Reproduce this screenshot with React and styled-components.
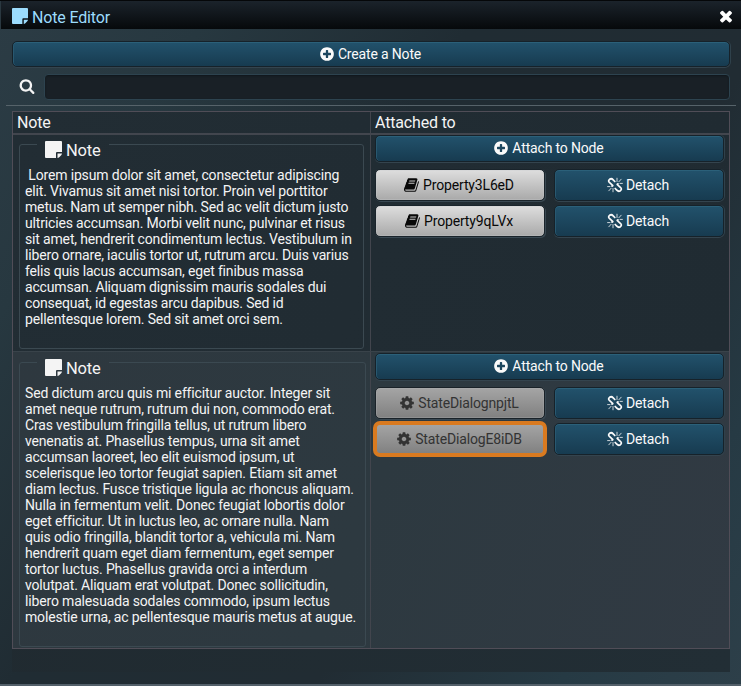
import React from 'react';
import styled, { createGlobalStyle, css } from 'styled-components';

const GlobalStyle = createGlobalStyle`
  *, *::before, *::after { box-sizing: border-box; }
  body {
    margin: 0;
    background: #1f2b33;
    color: #f4f4f4;
    font-family: Roboto, sans-serif;
    font-size: 14px;
    letter-spacing: -0.16px;
    overflow: hidden;
  }
`;

const Window = styled.main`
  display: flex;
  flex-direction: column;
  width: 741px;
  height: 686px;
  border-top: 1px solid #050709;
  border-bottom: 2px solid #53606a;
  background: linear-gradient(125deg, #2c3c45 0%, #273840 18%, #202c33 40%, #212c33 65%, #263a44 85%, #2d3f49 100%);
`;

const TitleBar = styled.header`
  display: flex;
  align-items: center;
  height: 28px;
  flex: none;
  padding: 2px 6px 0 11px;
  border-left: 1px solid #2a3840;
  background: linear-gradient(#1b232b, #06090b);
  color: #9cdcfd;
  font-size: 16px;
`;

const Title = styled.h1`
  flex: 1;
  margin: 2px 0 0 4px;
  font: inherit;
`;

const CloseButton = styled.button`
  display: flex;
  padding: 0;
  border: 0;
  background: none;
  color: #fff;
`;

const Content = styled.div`
  display: flex;
  flex-direction: column;
  padding: 12px 11px 0 12px;
`;

const tones = {
  blue: css`
    background: linear-gradient(#22526c, #173b50);
    border-color: #16222a;
    box-shadow: inset 0 1px #2b6079, inset 1px 0 #285870, 0 1px #34444e, 1px 0 #2f414b;
    color: #fafafa;
  `,
  light: css`
    background: linear-gradient(#dedede, #a9a9a9);
    border-color: #1a242b;
    box-shadow: inset 0 0 0 1px #c9cdd050, 1px 1px #3a4953;
    color: #080808;
  `,
  dim: css`
    background: linear-gradient(#a5a5a5, #808080);
    border-color: #1a2228;
    box-shadow: inset 0 0 0 1px #b0b4b650, 1px 1px #3a4953;
    color: #333;
  `,
};

const Button = styled.button`
  display: flex;
  align-items: center;
  justify-content: center;
  gap: 3px;
  width: 100%;
  height: ${(p) => p.$height || 32}px;
  padding: 0 2px ${(p) => (p.$height === 27 ? 2 : 0)}px 0;
  border: 1px solid;
  border-radius: 5px;
  font: 14px Roboto, sans-serif;
  letter-spacing: -0.16px;
  ${(p) => tones[p.$tone || 'blue']}
  ${(p) => p.$selected && css`
    outline: 4px solid #d97a20;
    outline-offset: -2px;
    border-color: #a4a8aa;
  `}
  & > svg { margin-bottom: ${(p) => (p.$height === 27 ? 0 : 1)}px; }
`;

const SearchRow = styled.label`
  display: flex;
  align-items: center;
  gap: 9px;
  height: 26px;
  margin-top: 7px;
  padding-left: 7px;
  & > svg { margin-bottom: 2px; }
`;

const SearchInput = styled.input`
  flex: 1;
  height: 26px;
  border: 1px solid #2d434f;
  border-radius: 4px;
  background: #192026;
  box-shadow: inset 0 1px 2px #10171c;
  color: #fff;
`;

const Divider = styled.hr`
  width: 730px;
  height: 1px;
  margin: 5px 0 5px -6px;
  border: 0;
  background: #56636a;
`;

const TableWell = styled.section`
  height: 561px;
  background: linear-gradient(100deg, #202a30, #222e35);
`;

const Table = styled.div`
  border: 1px solid #504d57;
`;

const Row = styled.div`
  display: grid;
  grid-template-columns: 357px 1fr;
  height: ${(p) => p.$height}px;
  background: ${(p) => (p.$alternate ? 'linear-gradient(110deg, #2e383f, #2d3940 50%, #313a43)' : 'linear-gradient(110deg, #222d34, #202b32)')};
  border-top: ${(p) => (p.$head ? '0' : p.$alternate ? '1px solid #39434a' : '2px solid #42464e')};
`;

const HeadCell = styled.div`
  padding: 1px 4px;
  font-size: 16px;
  line-height: 20px;
  & + & { border-left: 1px solid #42454d; }
`;

const NoteCell = styled.div`
  padding: ${(p) => p.$top}px ${(p) => p.$right}px 0 6px;
`;

const NoteBox = styled.fieldset`
  min-width: 0;
  height: ${(p) => p.$height}px;
  margin: 0;
  padding: 0 0 0 5px;
  border: 1px solid #3b4951;
  border-radius: 3px;
`;

const NoteLegend = styled.legend`
  display: flex;
  align-items: center;
  gap: 4px;
  height: 18px;
  margin-left: 12px;
  padding: 13px 8px 0;
  font-size: 16.5px;
  & > svg { margin-bottom: 2px; }
`;

const NoteText = styled.p`
  margin: 14px 0 0;
  line-height: 16px;
  white-space: pre;
`;

const AttachedCell = styled.div`
  display: grid;
  grid-template-columns: 170px 170px;
  align-content: start;
  gap: 4px 9px;
  padding: ${(p) => p.$top}px 0 0 4px;
  border-left: 1px solid #42454d;
`;

const AttachSlot = styled.div`
  grid-column: 1 / -1;
  margin-bottom: 3px;
`;

const Glyph = styled.svg`
  flex: none;
  width: ${(p) => p.$size}px;
  height: ${(p) => p.$size}px;
  fill: currentColor;
`;

const paths = {
  times: 'M1490 1322q0 40-28 68l-136 136q-28 28-68 28t-68-28l-294-294-294 294q-28 28-68 28t-68-28l-136-136q-28-28-28-68t28-68l294-294-294-294q-28-28-28-68t28-68l136-136q28-28 68-28t68 28l294 294 294-294q28-28 68-28t68 28l136 136q28 28 28 68t-28 68l-294 294 294 294q28 28 28 68z',
  search: 'M1216 832q0-185-131.5-316.5t-316.5-131.5-316.5 131.5-131.5 316.5 131.5 316.5 316.5 131.5 316.5-131.5 131.5-316.5zm512 832q0 52-38 90t-90 38q-54 0-90-38l-343-342q-179 124-399 124-143 0-273.5-55.5t-225-150-150-225-55.5-273.5 55.5-273.5 150-225 225-150 273.5-55.5 273.5 55.5 225 150 150 225 55.5 273.5q0 220-124 399l343 343q37 37 37 90z',
  plus: 'M1344 960v-128q0-26-19-45t-45-19h-256v-256q0-26-19-45t-45-19h-128q-26 0-45 19t-19 45v256h-256q-26 0-45 19t-19 45v128q0 26 19 45t45 19h256v256q0 26 19 45t45 19h128q26 0 45-19t19-45v-256h256q26 0 45-19t19-45zm320-64q0 209-103 385.5t-279.5 279.5-385.5 103-385.5-103-279.5-279.5-103-385.5 103-385.5 279.5-279.5 385.5-103 385.5 103 279.5 279.5 103 385.5z',
  cog: 'M1152 896q0-106-75-181t-181-75-181 75-75 181 75 181 181 75 181-75 75-181zm512-109v222q0 12-8 23t-20 13l-185 28q-19 54-39 91 35 50 107 138 10 12 10 25t-9 23q-27 37-99 108t-94 71q-12 0-26-9l-138-108q-44 23-91 38-16 136-29 186-7 28-36 28h-222q-14 0-24.5-8.5t-11.5-21.5l-28-184q-49-16-90-37l-141 107q-10 9-25 9-14 0-25-11-126-114-165-168-7-10-7-23 0-12 8-23 15-21 51-66.5t54-70.5q-27-50-41-99l-183-27q-13-2-21-12.5t-8-23.5v-222q0-12 8-23t19-13l186-28q14-46 39-92-40-57-107-138-10-12-10-24 0-10 9-23 26-36 98.5-107.5t94.5-71.5q13 0 26 10l138 107q44-23 91-38 16-136 29-186 7-28 36-28h222q14 0 24.5 8.5t11.5 21.5l28 184q49 16 90 37l142-107q9-9 24-9 13 0 25 10 129 119 165 170 7 8 7 22 0 12-8 23-15 21-51 66.5t-54 70.5q26 50 41 98l183 28q13 2 21 12.5t8 23.5z',
  book: 'M1639 478q40 57 18 129l-275 906q-19 64-76.5 107.5t-122.5 43.5h-923q-77 0-148.5-53.5t-99.5-131.5q-24-67-2-127 0-4 3-27t4-37q1-8-3-21.5t-3-19.5q2-11 8-21t16.5-23.5 16.5-23.5q23-38 45-91.5t30-91.5q3-10 .5-30t-.5-28q3-11 17-28t17-23q21-36 42-92t25-90q1-9-2.5-32t.5-28q4-13 22-30.5t22-22.5q19-26 42.5-84.5t27.5-96.5q1-8-3-25.5t-2-26.5q2-8 9-18t18-23 17-21q8-12 16.5-30.5t15-35 16-36 19.5-32 26.5-23.5 36-11.5 47.5 5.5l-1 3q38-9 51-9h761q74 0 114 56t18 130l-274 906q-36 119-71.5 153.5t-128.5 34.5h-869q-27 0-38 15-11 16-1 43 24 70 144 70h923q29 0 56-15.5t35-41.5l300-987q7-22 5-57 38 15 59 43zm-1064 2q-4 13 2 22.5t20 9.5h608q13 0 25.5-9.5t16.5-22.5l21-64q4-13-2-22.5t-20-9.5h-608q-13 0-25.5 9.5t-16.5 22.5zm-83 256q-4 13 2 22.5t20 9.5h608q13 0 25.5-9.5t16.5-22.5l21-64q4-13-2-22.5t-20-9.5h-608q-13 0-25.5 9.5t-16.5 22.5z',
};

const Icon = ({ name, size = 16 }) => (
  <Glyph $size={size} viewBox="0 0 1792 1792" aria-hidden="true"><path d={paths[name]} /></Glyph>
);

const StickyNote = ({ size = 17 }) => (
  <Glyph $size={size} viewBox="0 0 17 17" aria-hidden="true">
    <path d="M1 0H16Q17 0 17 1V11H12Q11 11 11 12V17H1Q0 17 0 16V1Q0 0 1 0ZM12.5 12.5H17Q17 13.4 16.2 14.2L14.2 16.2Q13.4 17 12.5 17Z" />
  </Glyph>
);

const BrokenLink = () => (
  <Glyph $size={16} viewBox="0 0 16 16" aria-hidden="true">
    <g fill="none" stroke="currentColor" strokeLinecap="round">
      <path strokeWidth="1.7" d="M7.8 4.5L6.2 2.8Q4.5 1 2.6 2.3Q.8 3.9 2.4 5.5L5.6 8.3Q6.2 9 5 9.1M8.2 11.5L9.8 13.2Q11.5 15 13.4 13.7Q15.2 12.1 13.6 10.5L10.4 7.7Q9.8 7 11 6.9" />
      <path strokeWidth=".8" d="M10 4.5V1.2M11.8 4.8L14.2 2.2M13 6.4H15.4M6 11.5V14.8M4.2 11.2L1.8 13.8M3 9.6H.6" />
    </g>
  </Glyph>
);

const notes = [
  {
    rowHeight: 218, boxHeight: 214, boxRight: 6, top: 0, attachTop: 0,
    text: ` Lorem ipsum dolor sit amet, consectetur adipiscing
elit. Vivamus sit amet nisi tortor. Proin vel porttitor
metus. Nam ut semper nibh. Sed ac velit dictum justo
ultricies accumsan. Morbi velit nunc, pulvinar et risus
sit amet, hendrerit condimentum lectus. Vestibulum in
libero ornare, iaculis tortor ut, rutrum arcu. Duis varius
felis quis lacus accumsan, eget finibus massa
accumsan. Aliquam dignissim mauris sodales dui
consequat, id egestas arcu dapibus. Sed id
pellentesque lorem. Sed sit amet orci sem.`,
    nodes: [{ label: 'Property3L6eD', icon: 'book', tone: 'light' }, { label: 'Property9qLVx', icon: 'book', tone: 'light' }],
  },
  {
    alternate: true, rowHeight: 297, boxHeight: 294, boxRight: 4, top: 1, attachTop: 1,
    text: `Sed dictum arcu quis mi efficitur auctor. Integer sit
amet neque rutrum, rutrum dui non, commodo erat.
Cras vestibulum fringilla tellus, ut rutrum libero
venenatis at. Phasellus tempus, urna sit amet
accumsan laoreet, leo elit euismod ipsum, ut
scelerisque leo tortor feugiat sapien. Etiam sit amet
diam lectus. Fusce tristique ligula ac rhoncus aliquam.
Nulla in fermentum velit. Donec feugiat lobortis dolor
eget efficitur. Ut in luctus leo, ac ornare nulla. Nam
quis odio fringilla, blandit tortor a, vehicula mi. Nam
hendrerit quam eget diam fermentum, eget semper
tortor luctus. Phasellus gravida orci a interdum
volutpat. Aliquam erat volutpat. Donec sollicitudin,
libero malesuada sodales commodo, ipsum lectus
molestie urna, ac pellentesque mauris metus at augue.`,
    nodes: [{ label: 'StateDialognpjtL', icon: 'cog', tone: 'dim' }, { label: 'StateDialogE8iDB', icon: 'cog', tone: 'dim', selected: true }],
  },
];

const NoteRow = ({ note }) => (
  <Row $height={note.rowHeight} $alternate={note.alternate}>
    <NoteCell $top={note.top} $right={note.boxRight}>
      <NoteBox $height={note.boxHeight}>
        <NoteLegend><StickyNote />Note</NoteLegend>
        <NoteText>{note.text}</NoteText>
      </NoteBox>
    </NoteCell>
    <AttachedCell $top={note.attachTop}>
      <AttachSlot><Button $height={27}><Icon name="plus" />Attach to Node</Button></AttachSlot>
      {note.nodes.map((node) => (
        <React.Fragment key={node.label}>
          <Button $tone={node.tone} $selected={node.selected}><Icon name={node.icon} />{node.label}</Button>
          <Button><BrokenLink />Detach</Button>
        </React.Fragment>
      ))}
    </AttachedCell>
  </Row>
);

export default function App() {
  return (
    <>
      <GlobalStyle />
      <Window>
        <TitleBar>
          <StickyNote size={16} />
          <Title>Note Editor</Title>
          <CloseButton aria-label="Close"><Icon name="times" size={18} /></CloseButton>
        </TitleBar>
        <Content>
          <Button $height={26}><Icon name="plus" />Create a Note</Button>
          <SearchRow><Icon name="search" /><SearchInput aria-label="Search notes" /></SearchRow>
          <Divider />
          <TableWell>
            <Table>
              <Row $head $height={21}><HeadCell>Note</HeadCell><HeadCell>Attached to</HeadCell></Row>
              {notes.map((note) => <NoteRow key={note.nodes[0].label} note={note} />)}
            </Table>
          </TableWell>
        </Content>
      </Window>
    </>
  );
}
